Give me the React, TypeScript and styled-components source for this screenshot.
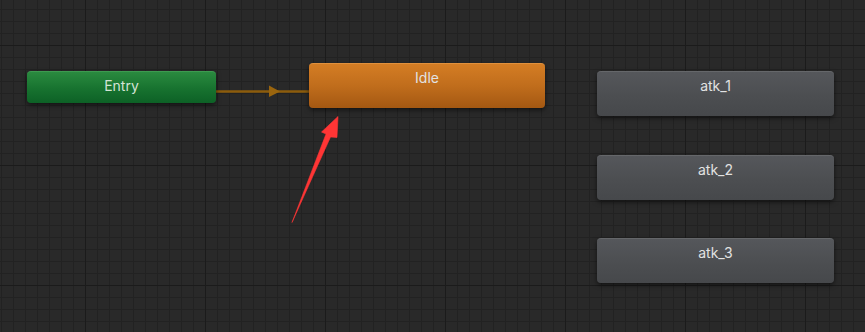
import styled, { createGlobalStyle } from "styled-components";

const GlobalStyle = createGlobalStyle`
  html, body {
    margin: 0;
    padding: 0;
    background: #282828;
    overflow: hidden;
  }
`;

type Kind = "entry" | "default" | "state";

const fills: Record<Kind, string> = {
  entry: "linear-gradient(to bottom, #2a8a3f 0%, #17722f 55%, #0d6126 100%)",
  default: "linear-gradient(to bottom, #d47d24 0%, #c06d1c 50%, #a45812 100%)",
  state: "linear-gradient(to bottom, #55575b 0%, #4c4e51 55%, #46484b 100%)",
};

const edges: Record<Kind, string> = {
  entry: "#3d9a50",
  default: "#e0913d",
  state: "#65676a",
};

const Canvas = styled.div`
  position: relative;
  width: 865px;
  height: 332px;
  overflow: hidden;
  background-color: #292929;
  background-image: linear-gradient(to right, #1b1b1b 1px, transparent 1px),
    linear-gradient(to bottom, #1b1b1b 1px, transparent 1px),
    linear-gradient(to right, #222222 1px, transparent 1px),
    linear-gradient(to bottom, #222222 1px, transparent 1px);
  background-size: 120px 120px, 120px 120px, 12px 12px, 12px 12px;
  background-position: 85px 0, 0 45px, 1px 0, 0 9px;
  font-family: Inter, "Noto Sans", "DejaVu Sans", sans-serif;
`;

const Node = styled.div<{ $kind: Kind }>`
  position: absolute;
  box-sizing: border-box;
  border-radius: 4px;
  background: ${(p) => fills[p.$kind]};
  border-top: 1px solid ${(p) => edges[p.$kind]};
  box-shadow: 0 2px 5px rgba(0, 0, 0, 0.55);
  color: ${(p) => (p.$kind === "entry" ? "#d3e3d5" : "#e2e2e2")};
  font-size: 14px;
  line-height: 18px;
  padding-top: 5px;
  text-align: center;
`;

const Overlay = styled.svg`
  position: absolute;
  left: 0;
  top: 0;
  pointer-events: none;
`;

const nodes: { label: string; kind: Kind; x: number; y: number; w: number; h: number }[] = [
  { label: "Entry", kind: "entry", x: 27, y: 71, w: 189, h: 32 },
  { label: "Idle", kind: "default", x: 309, y: 63, w: 236, h: 45 },
  { label: "atk_1", kind: "state", x: 597, y: 71, w: 237, h: 45 },
  { label: "atk_2", kind: "state", x: 597, y: 155, w: 237, h: 45 },
  { label: "atk_3", kind: "state", x: 597, y: 238, w: 237, h: 45 },
];

const App = () => {
  return (
    <>
      <GlobalStyle />
      <Canvas>
        <Overlay width={865} height={332}>
          <line x1={216} y1={91.5} x2={309} y2={91.5} stroke="#8c5c0c" strokeWidth={2.5} />
          <polygon points="269,85.5 280,91.5 269,97" fill="#9a650e" />
        </Overlay>
        {nodes.map((n) => (
          <Node
            key={n.label}
            $kind={n.kind}
            style={{ left: n.x, top: n.y, width: n.w, height: n.h }}
          >
            {n.label}
          </Node>
        ))}
        <Overlay width={865} height={332}>
          <polygon
            points="338,116.5 321.5,132 326,134 292,222.5 330.5,137 337,137.5"
            fill="#ff3535"
            stroke="#ff3535"
            strokeWidth={0.6}
            strokeLinejoin="round"
          />
        </Overlay>
      </Canvas>
    </>
  );
};

export default App;
